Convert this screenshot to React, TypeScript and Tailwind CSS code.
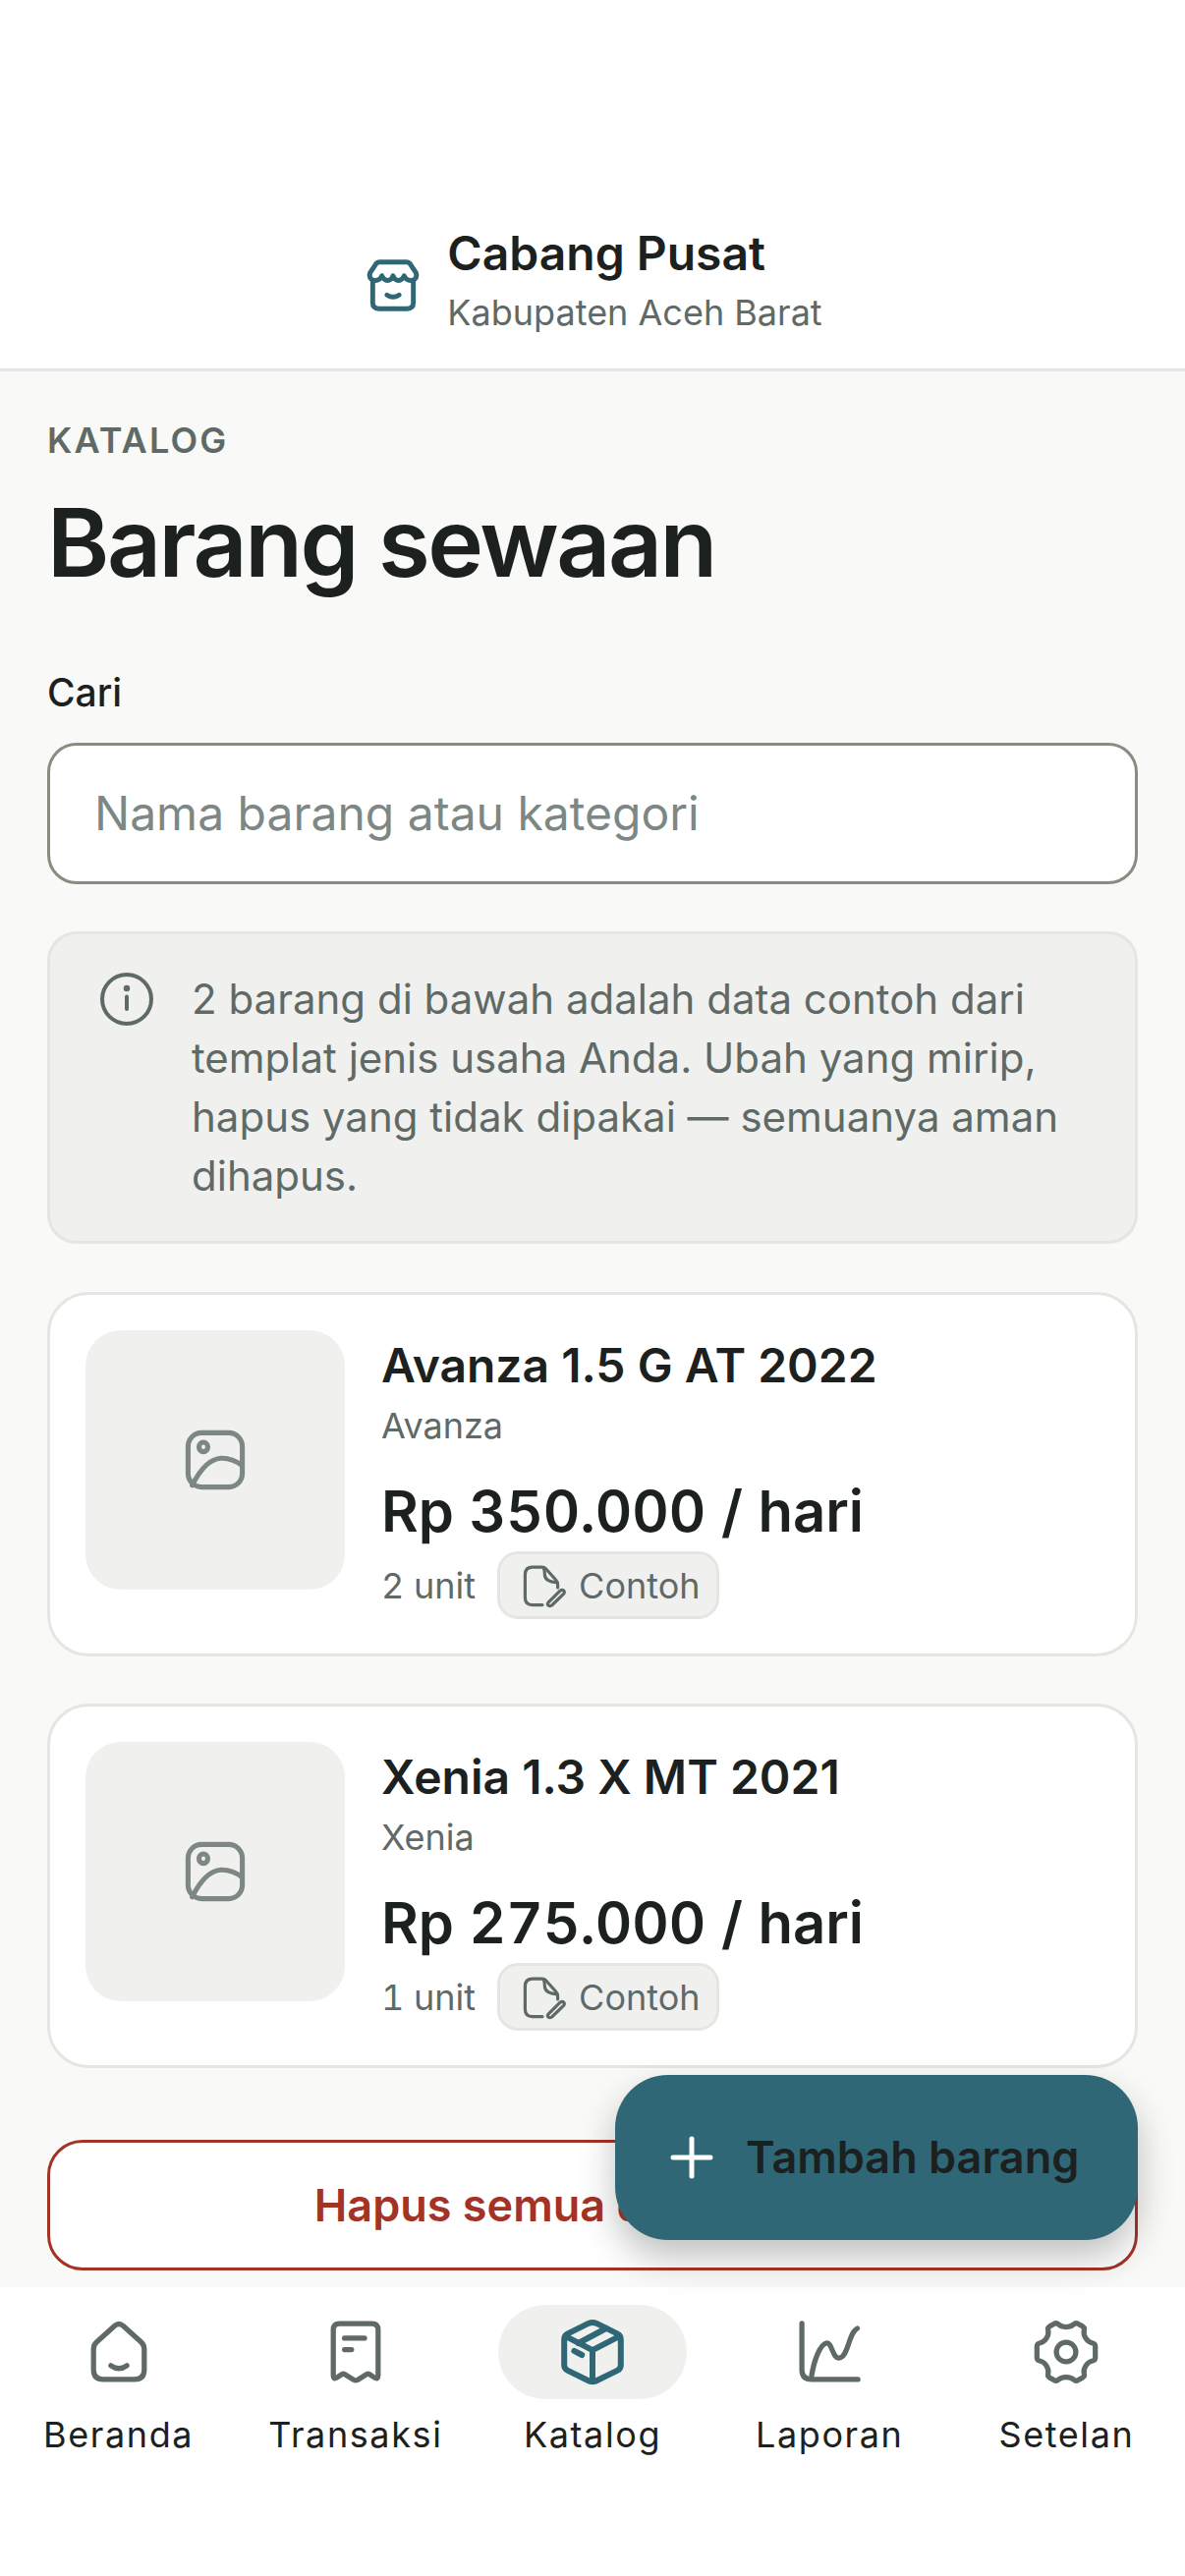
const ink = "#5f6a67";
const teal = "#2f6777";

function Icon({ size = 72, color = ink, sw = 1.75, children }: { size?: number; color?: string; sw?: number; children: React.ReactNode }) {
  return (
    <svg width={size} height={size} viewBox="0 0 24 24" fill="none" stroke={color} strokeWidth={sw} strokeLinecap="round" strokeLinejoin="round" className="shrink-0">
      {children}
    </svg>
  );
}

const HomeI = () => (
  <Icon>
    <path d="M10.6 3.1 L4.5 8.6 Q3.4 9.6 3.4 11 V18 Q3.4 21.3 6.7 21.3 H17.3 Q20.6 21.3 20.6 18 V11 Q20.6 9.6 19.5 8.6 L13.4 3.1 Q12 1.9 10.6 3.1 Z" />
    <path d="M9.3 16.6 Q12 18.6 14.7 16.6" />
  </Icon>
);
const ReceiptI = () => (
  <Icon>
    <path d="M6.5 2.4 H17.5 Q19.6 2.4 19.6 4.5 V20 Q19.6 21.4 18.4 20.7 L16.6 19.5 Q16.2 19.3 15.8 19.5 L12.6 21.5 Q12 21.8 11.4 21.5 L8.2 19.5 Q7.8 19.3 7.4 19.5 L5.6 20.7 Q4.4 21.4 4.4 20 V4.5 Q4.4 2.4 6.5 2.4 Z" />
    <path d="M8.2 7.3 H15" />
    <path d="M8.2 11.2 H10.6" />
  </Icon>
);
const BoxI = () => (
  <Icon color={teal} sw={2}>
    <path d="M10.6 2.3 L3.6 5.8 Q2.4 6.4 2.4 7.7 V16.4 Q2.4 17.7 3.6 18.3 L11 21.9 Q12 22.3 13 21.9 L20.4 18.3 Q21.6 17.7 21.6 16.4 V7.7 Q21.6 6.4 20.4 5.8 L13.4 2.3 Q12 1.7 10.6 2.3 Z" />
    <path d="M2.8 6.6 L12 11.4 L21.2 6.6" />
    <path d="M12 11.4 V22" />
    <path d="M7.2 9 L16.6 4" />
    <path d="M5.8 11.6 L8.4 13" />
  </Icon>
);
const ChartI = () => (
  <Icon>
    <path d="M2.7 2.3 V18 Q2.7 21.3 6 21.3 H21.7" />
    <path d="M6 20 C7 14 9 9.5 11 9 C13 8.5 13 14.5 15.5 14 C18.5 13.5 18.5 5.5 21.5 4" />
  </Icon>
);
const GearI = () => (
  <Icon>
    <path d="M9.4 2.6 Q10.2 3.5 12 3.5 Q13.8 3.5 14.6 2.6 Q15.2 2 16 2.4 L17.6 3.3 Q18.4 3.8 18.1 4.7 Q17.8 6 18.7 7.4 Q19.6 8.8 21 9 Q21.8 9.2 21.9 10 V14 Q21.8 14.8 21 15 Q19.6 15.2 18.7 16.6 Q17.8 18 18.1 19.3 Q18.4 20.2 17.6 20.7 L16 21.6 Q15.2 22 14.6 21.4 Q13.8 20.5 12 20.5 Q10.2 20.5 9.4 21.4 Q8.8 22 8 21.6 L6.4 20.7 Q5.6 20.2 5.9 19.3 Q6.2 18 5.3 16.6 Q4.4 15.2 3 15 Q2.2 14.8 2.1 14 V10 Q2.2 9.2 3 9 Q4.4 8.8 5.3 7.4 Q6.2 6 5.9 4.7 Q5.6 3.8 6.4 3.3 L8 2.4 Q8.8 2 9.4 2.6 Z" />
    <circle cx="12" cy="12" r="3.3" />
  </Icon>
);
const StoreI = () => (
  <Icon size={62} color={teal} sw={1.9}>
    <path d="M6.8 2.6 H17.2 Q18.2 2.6 18.8 3.4 L20.9 6.6 Q21.5 7.6 21 8.8 Q20.3 9.9 19 9.9 Q17.1 9.9 16.4 8 Q15.6 9.9 14.2 9.9 Q12.7 9.9 12 8 Q11.3 9.9 9.8 9.9 Q8.4 9.9 7.6 8 Q6.9 9.9 5 9.9 Q3.7 9.9 3 8.8 Q2.5 7.6 3.1 6.6 L5.2 3.4 Q5.8 2.6 6.8 2.6 Z" />
    <path d="M4 9.9 V18.6 Q4 21 6.4 21 H17.6 Q20 21 20 18.6 V9.9" />
    <path d="M9.6 15.6 Q12 17.2 14.4 15.6" />
  </Icon>
);
const ImageI = () => (
  <Icon color="#7d8783" sw={1.7}>
    <rect x="2.8" y="2.8" width="18.4" height="18.4" rx="4.6" />
    <ellipse cx="8" cy="7.6" rx="1.5" ry="1.6" />
    <path d="M4.2 20.6 C7 15 10 11.6 14 11.4 C17 11.3 19.2 12.4 21 13.8" />
  </Icon>
);
const DraftI = () => (
  <svg width="48" height="48" viewBox="0 0 24 24" fill="none" stroke={ink} strokeWidth="1.6" strokeLinecap="round" strokeLinejoin="round" className="shrink-0">
    <path d="M12 21.8 H7 Q3.2 21.8 3.2 18 V6.4 Q3.2 2.6 7 2.6 H11.6 Q13 2.6 14 3.6 L18.8 9 Q19.8 10.2 19.8 11.4 V13" />
    <path d="M12.6 3 Q13.2 4 13.2 6.4 Q13.2 10 19.6 10.4" />
    <path d="M15 20.6 L21 14.6 Q22.1 13.8 22.9 14.6 Q23.5 15.4 22.8 16.2 L16.8 22 Q15.8 22.6 15 22 Q14.4 21.4 15 20.6 Z" />
  </svg>
);
const InfoI = () => (
  <svg width="60" height="60" viewBox="0 0 24 24" fill="none" stroke={ink} strokeWidth="1.6" strokeLinecap="round" className="shrink-0">
    <circle cx="12" cy="12" r="10" />
    <path d="M12 11 V16" />
    <circle cx="12" cy="7.6" r="0.5" fill={ink} />
  </svg>
);

function Card({ title, sub, price, unit }: { title: string; sub: string; price: string; unit: string }) {
  return (
    <div className="flex h-[371px] gap-[37px] rounded-[42px] border-[3px] border-[#e5e6e2] bg-white p-[36px]">
      <div className="flex size-[264px] shrink-0 items-center justify-center rounded-[36px] bg-[#f0f1ef]">
        <ImageI />
      </div>
      <div className="flex min-w-0 flex-col pt-[3px]">
        <div className="text-[48px] font-semibold leading-[66px] text-[#1c2120]">{title}</div>
        <div className="mt-[4px] text-[36px] leading-[48px] text-[#5f6a67]">{sub}</div>
        <div className="mt-[24px] text-[58px] font-semibold leading-[78px] text-[#1c2120] tabular-nums">{price}</div>
        <div className="mt-[2px] flex items-center gap-[22px]">
          <span className="whitespace-nowrap text-[36px] leading-[48px] text-[#5f6a67] tabular-nums">{unit}</span>
          <span className="flex h-[69px] items-center gap-[13px] rounded-[21px] border-[3px] border-[#e5e6e2] bg-[#f0f1ef] pl-[19px] pr-[16px] text-[36px] text-[#5f6a67]">
            <DraftI />
            Contoh
          </span>
        </div>
      </div>
    </div>
  );
}

function NavItem({ label, active, children }: { label: string; active?: boolean; children: React.ReactNode }) {
  return (
    <div className="flex flex-1 flex-col items-center">
      <div className={`flex h-[96px] w-[192px] items-center justify-center rounded-[48px] ${active ? "bg-[#f0f1ef]" : ""}`}>{children}</div>
      <div className="mt-[12px] text-[36px] leading-[48px] tracking-[1.6px] text-[#1c2120]">{label}</div>
    </div>
  );
}

export default function App() {
  return (
    <div className="relative flex h-[2622px] w-[1206px] flex-col overflow-hidden bg-white font-['Inter',sans-serif]">
      <header className="flex h-[378px] shrink-0 items-end justify-center border-b-[3px] border-[#e5e6e2] bg-white pb-[30px]">
        <div className="flex items-center gap-[24px]">
          <div className="pt-[12px]"><StoreI /></div>
          <div className="flex flex-col">
            <div className="text-[48px] font-semibold leading-[66px] text-[#1c2120]">Cabang Pusat</div>
            <div className="text-[36px] leading-[54px] text-[#5f6a67]">Kabupaten Aceh Barat</div>
          </div>
        </div>
      </header>

      <main className="flex min-h-0 flex-1 flex-col overflow-hidden bg-[#f9f9f7] px-[48px] pt-[46px]">
        <div className="text-[36px] font-semibold leading-[48px] tracking-[2.2px] text-[#5f6a67]">KATALOG</div>
        <h1 className="mt-[20px] text-[96px] font-semibold leading-[120px] tracking-[-2.4px] text-[#1c2120]">Barang sewaan</h1>
        <div className="mt-[66px] text-[39px] font-medium leading-[54px] text-[#1c2120]">Cari</div>
        <div className="mt-[24px] flex h-[144px] shrink-0 items-center rounded-[30px] border-[3px] border-[#8a8c80] bg-white px-[45px] text-[48px] text-[#7d8783]">
          Nama barang atau kategori
        </div>
        <div className="mt-[48px] flex gap-[36px] rounded-[30px] border-[3px] border-[#e5e6e2] bg-[#f0f1ef] py-[36px] pl-[48px] pr-[48px]">
          <InfoI />
          <p className="text-[42px] leading-[60px] text-[#5f6a67]">
            2 barang di bawah adalah data contoh dari templat jenis usaha Anda. Ubah yang mirip, hapus yang tidak dipakai — semuanya aman dihapus.
          </p>
        </div>
        <div className="mt-[49px] flex flex-col gap-[48px]">
          <Card title="Avanza 1.5 G AT 2022" sub="Avanza" price="Rp 350.000 / hari" unit="2 unit" />
          <Card title="Xenia 1.3 X MT 2021" sub="Xenia" price="Rp 275.000 / hari" unit="1 unit" />
        </div>
        <div className="mt-[73px] flex h-[133px] shrink-0 items-center justify-center rounded-[36px] border-[3px] border-[#a33325] bg-white text-[45px] font-semibold text-[#a33325]">
          Hapus semua data contoh
        </div>
      </main>

      <nav className="flex h-[294px] shrink-0 bg-white pt-[18px]">
        <NavItem label="Beranda"><HomeI /></NavItem>
        <NavItem label="Transaksi"><ReceiptI /></NavItem>
        <NavItem label="Katalog" active><BoxI /></NavItem>
        <NavItem label="Laporan"><ChartI /></NavItem>
        <NavItem label="Setelan"><GearI /></NavItem>
      </nav>

      <div className="absolute left-[626px] top-[2112px] flex h-[168px] w-[532px] items-center gap-[31px] rounded-[54px] bg-[#2f6777] pl-[54px] text-[45px] font-semibold text-[#1c2120] shadow-[0_18px_36px_rgba(28,33,32,0.28)]">
        <svg width="48" height="48" viewBox="0 0 48 48" fill="none" stroke="#ffffff" strokeWidth="5" strokeLinecap="round" className="shrink-0">
          <path d="M24 5 V43 M5 24 H43" />
        </svg>
        Tambah barang
      </div>
    </div>
  );
}
